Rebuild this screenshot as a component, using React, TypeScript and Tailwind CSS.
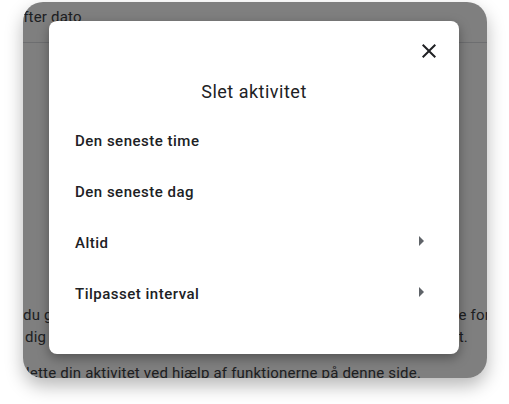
import React from "react";

const bgText = "text-[15px] leading-[22px] tracking-[0.2px] text-[#3c4043] whitespace-nowrap";

function Row({ label, arrow }: { label: string; arrow?: boolean }) {
  return (
    <div className="h-[51px] flex items-center justify-between px-[26px]">
      <span className="text-[15px] font-medium tracking-[0.5px] text-[#202124]">{label}</span>
      {arrow && (
        <svg width="24" height="24" viewBox="0 0 24 24" className="mb-[6px]">
          <path d="M10 17l5-5-5-5v10z" fill="#5f6368" />
        </svg>
      )}
    </div>
  );
}

export default function App() {
  return (
    <div
      className="w-[509px] h-[404px] bg-white pl-[23px] pt-[2px]"
      style={{ fontFamily: "Roboto, 'Liberation Sans', sans-serif" }}
    >
      <div className="relative w-[464px] h-[376px] rounded-[20px] overflow-hidden bg-white shadow-[0_8px_18px_rgba(0,0,0,0.28)]">
        {/* background page */}
        <div className="h-[41px] border-b border-[#dadce0] pt-[4px]">
          <div className={`${bgText} leading-[20px] -ml-[8px]`}>efter dato</div>
        </div>
        <div className="mt-[261px]">
          <div className={`${bgText} flex justify-between -mr-[3px]`}>
            <span>du gemmer din aktivitet</span>
            <span>tjenesterne mere nyttige for</span>
          </div>
          <div className={`${bgText} flex justify-between pl-[2px] pr-[19px]`}>
            <span>dig og andre</span>
            <span>oplevelse, der er tilpasset.</span>
          </div>
          <div className={`${bgText} mt-[14px] -ml-[5px]`}>
            slette din aktivitet ved hjælp af funktionerne på denne side.
          </div>
        </div>
        {/* overlay */}
        <div className="absolute inset-0 bg-black/50" />
        {/* dialog */}
        <div className="absolute left-[26px] top-[19px] w-[410px] h-[333px] bg-white rounded-[8px] shadow-[0_4px_12px_rgba(0,0,0,0.35)]">
          <div className="flex justify-end pt-[18px] pr-[18px]">
            <svg width="24" height="24" viewBox="0 0 24 24">
              <path
                d="M19 6.41L17.59 5 12 10.59 6.41 5 5 6.41 10.59 12 5 17.59 6.41 19 12 13.41 17.59 19 19 17.59 13.41 12z"
                fill="#202124"
              />
            </svg>
          </div>
          <div className="mt-[17px] text-center text-[18px] leading-[24px] tracking-[0.5px] text-[#202124]">
            Slet aktivitet
          </div>
          <div className="mt-[12px]">
            <Row label="Den seneste time" />
            <Row label="Den seneste dag" />
            <Row label="Altid" arrow />
            <Row label="Tilpasset interval" arrow />
          </div>
        </div>
      </div>
    </div>
  );
}
